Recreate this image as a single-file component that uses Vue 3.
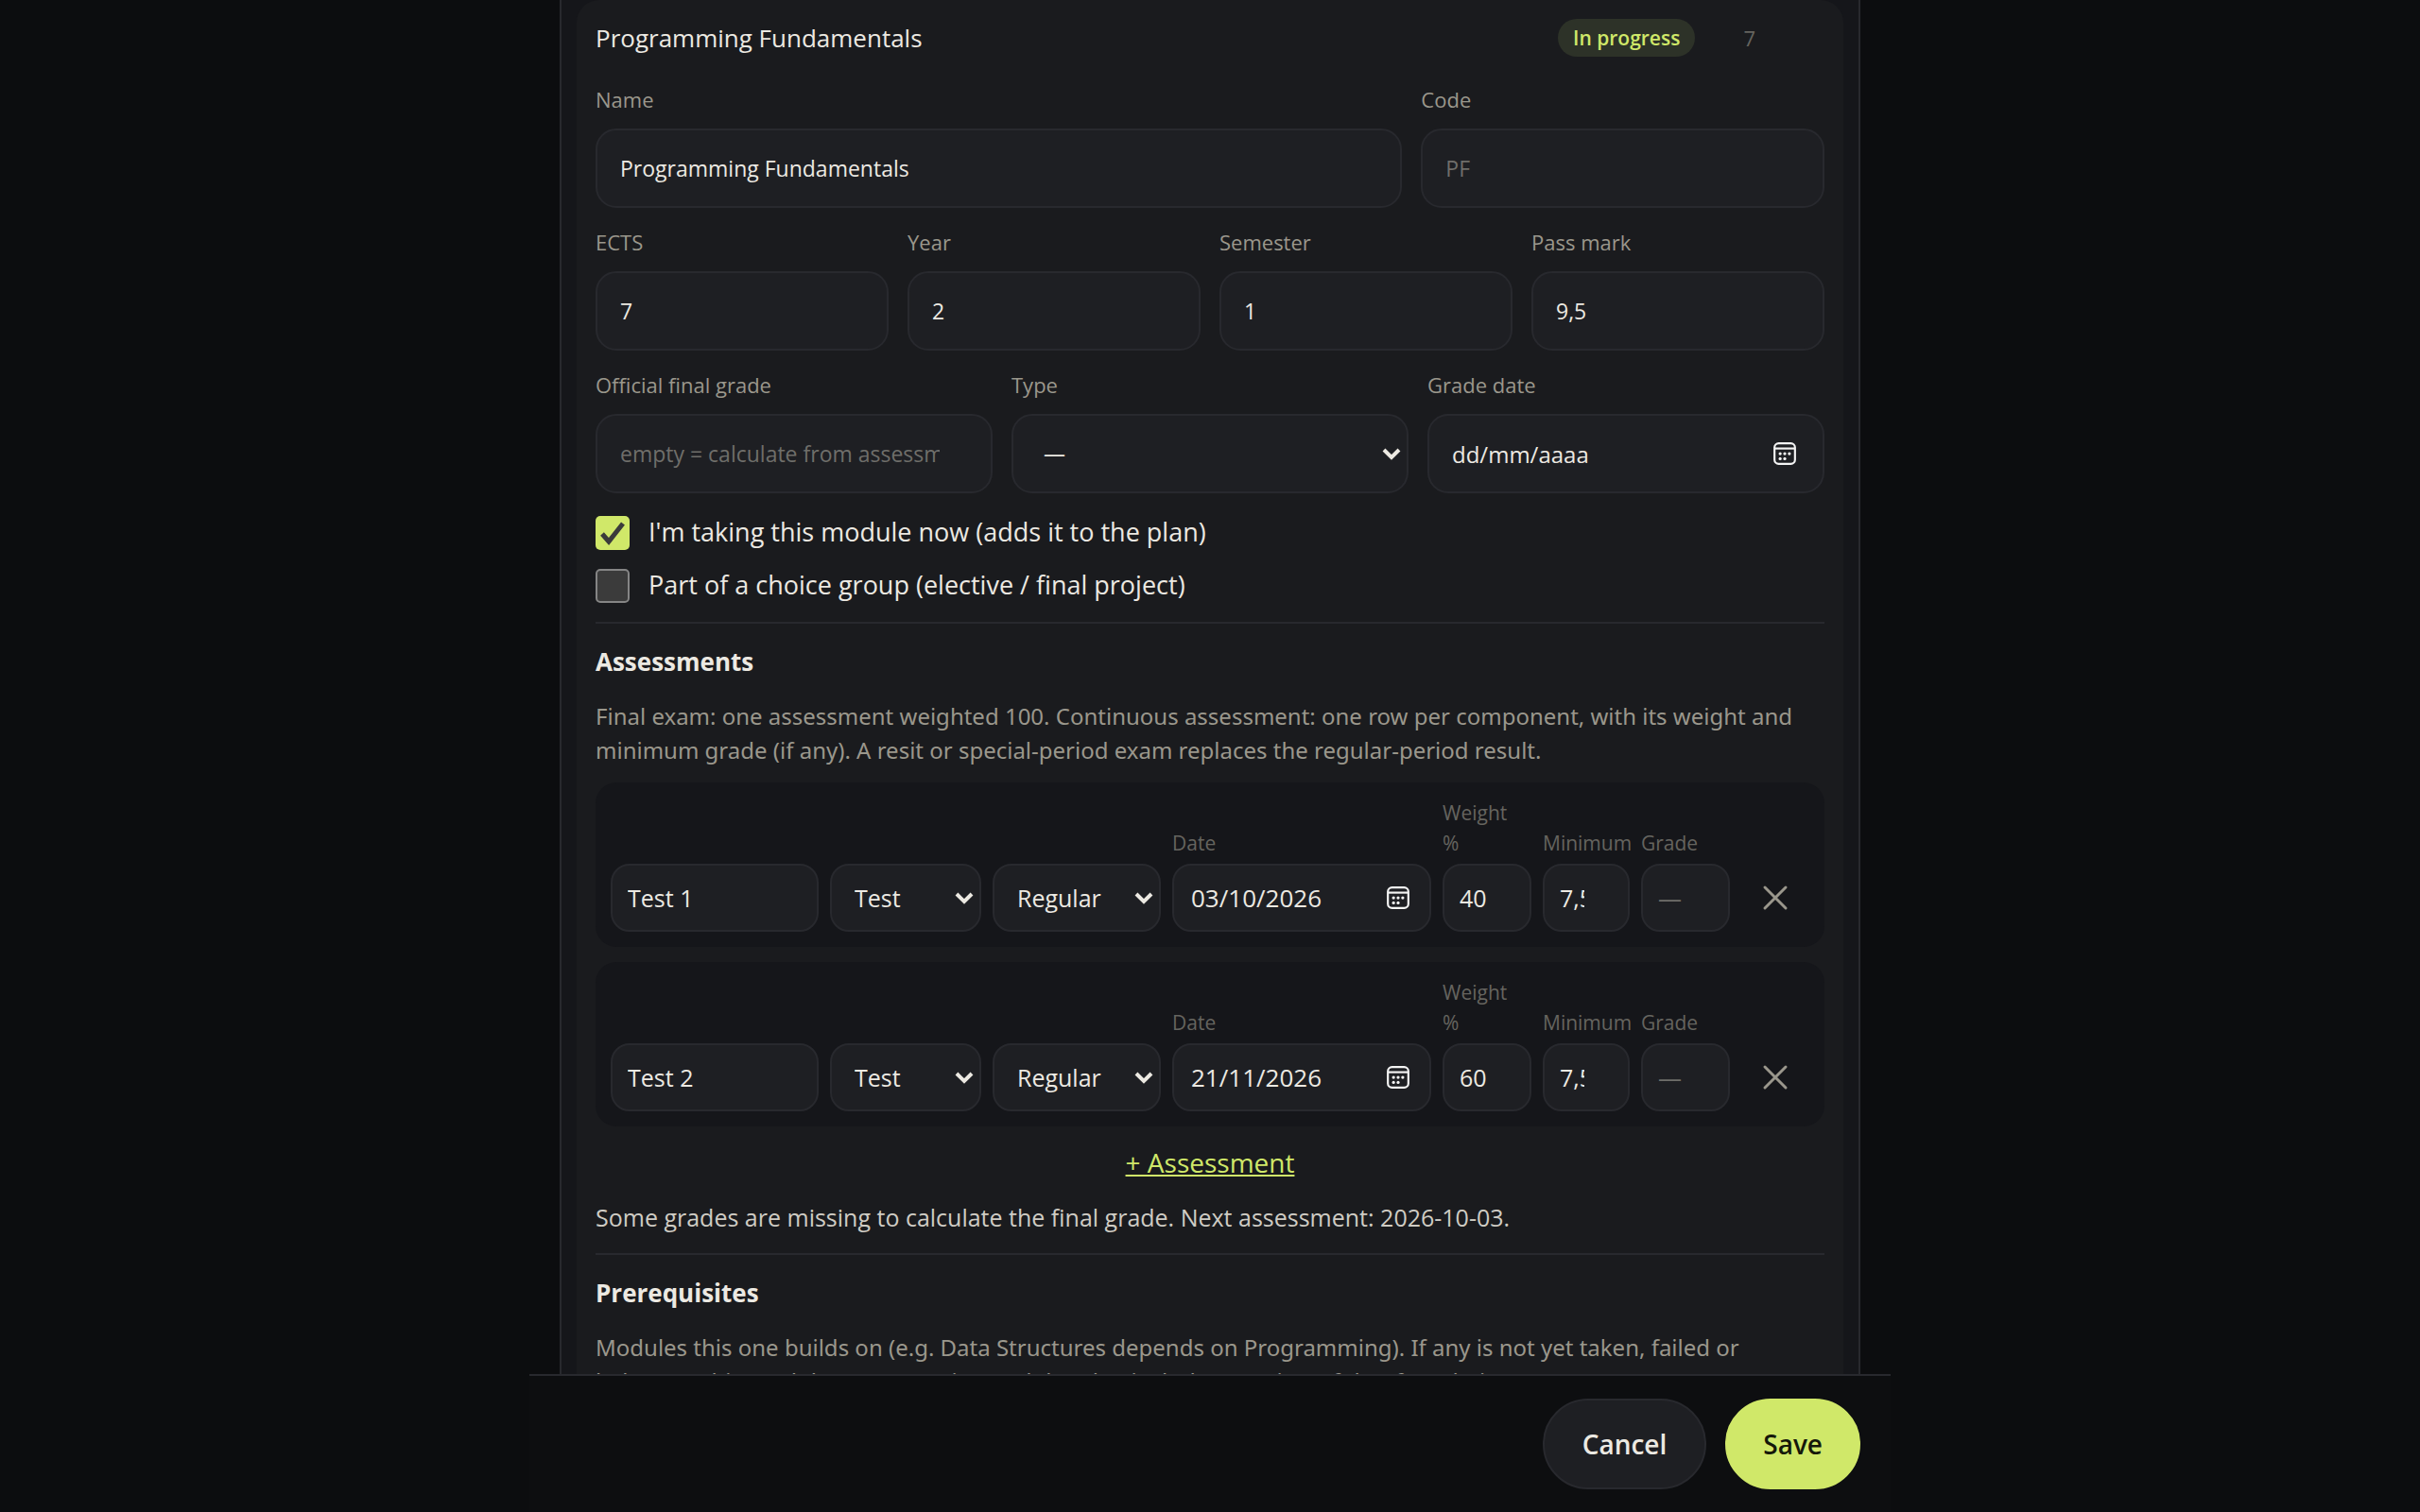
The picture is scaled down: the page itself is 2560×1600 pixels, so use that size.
<script setup>
import { ref } from 'vue'

const moduleForm = ref({
  name: 'Programming Fundamentals',
  code: '',
  ects: '7',
  year: '2',
  semester: '1',
  passMark: '9,5',
  finalGrade: '',
  type: '—',
  gradeDate: 'dd/mm/aaaa',
  taking: true,
  choiceGroup: false,
})

const assessments = ref([
  { id: 1, name: 'Test 1', kind: 'Test', period: 'Regular', date: '03/10/2026', weight: '40', minimum: '7,5', grade: '' },
  { id: 2, name: 'Test 2', kind: 'Test', period: 'Regular', date: '21/11/2026', weight: '60', minimum: '7,5', grade: '' },
])

const numbers = [
  { key: 'ects', label: 'ECTS' },
  { key: 'year', label: 'Year' },
  { key: 'semester', label: 'Semester' },
  { key: 'passMark', label: 'Pass mark' },
]

function removeRow(id) {
  assessments.value = assessments.value.filter((a) => a.id !== id)
}
</script>

<template>
  <div class="page">
    <main class="scroller">
      <div class="panel">
        <section class="card">
          <header class="card-head">
            <h2 class="title">Programming Fundamentals</h2>
            <span class="badge">In progress</span>
            <span class="credits">7</span>
          </header>

          <div class="row cols-name">
            <div class="field">
              <label for="name">Name</label>
              <input id="name" v-model="moduleForm.name" class="control" type="text" />
            </div>
            <div class="field">
              <label for="code">Code</label>
              <input id="code" v-model="moduleForm.code" class="control" type="text" placeholder="PF" />
            </div>
          </div>

          <div class="row cols-4">
            <div v-for="n in numbers" :key="n.key" class="field">
              <label :for="n.key">{{ n.label }}</label>
              <input :id="n.key" v-model="moduleForm[n.key]" class="control" type="text" inputmode="decimal" />
            </div>
          </div>

          <div class="row cols-3">
            <div class="field">
              <label for="final">Official final grade</label>
              <input id="final" v-model="moduleForm.finalGrade" class="control number" type="text" inputmode="decimal" placeholder="empty = calculate from assessments" />
            </div>
            <div class="field">
              <label for="type">Type</label>
              <div class="wrap">
                <select id="type" v-model="moduleForm.type" class="control"><option>—</option></select>
                <svg class="chevron" viewBox="0 0 20 14" aria-hidden="true"><path d="M2 3l8 8 8-8" /></svg>
              </div>
            </div>
            <div class="field">
              <label for="gradeDate">Grade date</label>
              <div class="wrap">
                <input id="gradeDate" v-model="moduleForm.gradeDate" class="control date" type="text" />
                <svg class="calendar" viewBox="0 0 24 24" aria-hidden="true">
                  <rect x="2" y="2" width="20" height="20" rx="4" /><path d="M2 7h20" />
                  <g class="dots"><circle cx="7.500" cy="12" r="1.500" /><circle cx="12" cy="12" r="1.500" /><circle cx="16.500" cy="12" r="1.500" /><circle cx="7.500" cy="17" r="1.500" /><circle cx="12" cy="17" r="1.500" /></g>
                </svg>
              </div>
            </div>
          </div>

          <div class="checks">
            <label class="check"><input v-model="moduleForm.taking" type="checkbox" />I'm taking this module now (adds it to the plan)</label>
            <label class="check"><input v-model="moduleForm.choiceGroup" type="checkbox" />Part of a choice group (elective / final project)</label>
          </div>

          <section class="block">
            <h3>Assessments</h3>
            <p class="help">Final exam: one assessment weighted 100. Continuous assessment: one row per component, with its weight and minimum grade (if any). A resit or special-period exam replaces the regular-period result.</p>

            <div class="list">
              <div v-for="a in assessments" :key="a.id" class="assessment">
                <input v-model="a.name" class="control small" type="text" aria-label="Assessment name" />
                <div class="wrap">
                  <select v-model="a.kind" class="control small" aria-label="Kind"><option>Test</option></select>
                  <svg class="chevron" viewBox="0 0 20 14" aria-hidden="true"><path d="M2 3l8 8 8-8" /></svg>
                </div>
                <div class="wrap">
                  <select v-model="a.period" class="control small" aria-label="Period"><option>Regular</option></select>
                  <svg class="chevron" viewBox="0 0 20 14" aria-hidden="true"><path d="M2 3l8 8 8-8" /></svg>
                </div>
                <div class="mini">
                  <label :for="'date' + a.id">Date</label>
                  <div class="wrap">
                    <input :id="'date' + a.id" v-model="a.date" class="control small date" type="text" />
                    <svg class="calendar" viewBox="0 0 24 24" aria-hidden="true">
                      <rect x="2" y="2" width="20" height="20" rx="4" /><path d="M2 7h20" />
                      <g class="dots"><circle cx="7.500" cy="12" r="1.500" /><circle cx="12" cy="12" r="1.500" /><circle cx="16.500" cy="12" r="1.500" /><circle cx="7.500" cy="17" r="1.500" /><circle cx="12" cy="17" r="1.500" /></g>
                    </svg>
                  </div>
                </div>
                <div class="mini">
                  <label :for="'weight' + a.id">Weight<br />%</label>
                  <input :id="'weight' + a.id" v-model="a.weight" class="control small number" type="text" inputmode="decimal" />
                </div>
                <div class="mini">
                  <label :for="'min' + a.id">Minimum</label>
                  <input :id="'min' + a.id" v-model="a.minimum" class="control small number" type="text" inputmode="decimal" />
                </div>
                <div class="mini">
                  <label :for="'grade' + a.id">Grade</label>
                  <input :id="'grade' + a.id" v-model="a.grade" class="control small number" type="text" inputmode="decimal" placeholder="—" />
                </div>
                <button class="remove" type="button" aria-label="Remove assessment" @click="removeRow(a.id)">
                  <svg viewBox="0 0 28 28" aria-hidden="true"><path d="M3 3l22 22M25 3L3 25" /></svg>
                </button>
              </div>
            </div>

            <button class="add" type="button">+ Assessment</button>
            <p class="status">Some grades are missing to calculate the final grade. Next assessment: 2026-10-03.</p>
          </section>

          <section class="block">
            <h3>Prerequisites</h3>
            <p class="help">Modules this one builds on (e.g. Data Structures depends on Programming). If any is not yet taken, failed or<br />below 10, this module gets a caution and the plan includes a review of that foundation.</p>
          </section>
        </section>
      </div>
    </main>

    <footer class="actions">
      <button class="btn" type="button">Cancel</button>
      <button class="btn primary" type="button">Save</button>
    </footer>
  </div>
</template>

<style>
body {
  background: #0c0d0f;
}
</style>

<style scoped>
.page {
  display: flex;
  flex-direction: column;
  height: 100vh;
  color: #ece9e2;
  font-family: "Segoe UI", "Open Sans", "Noto Sans", sans-serif;
  font-size: 25px;
}

.page *,
.page {
  box-sizing: border-box;
}

button,
input,
select {
  margin: 0;
  color: inherit;
  font: inherit;
}

.scroller {
  flex: 1;
  min-height: 0;
  overflow: hidden;
}

.panel {
  max-width: 1376px;
  min-height: 100%;
  margin: 0 auto;
  padding: 0 16px;
  border: solid #28292e;
  border-width: 0 2px;
  background: #15161a;
}

.card {
  padding: 16px 20px 40px;
  border-radius: 24px;
  background: #1a1b1e;
}

.card-head {
  display: flex;
  align-items: center;
  height: 48px;
  padding-right: 73px;
}

.title {
  flex: 1;
  margin: 0;
  font-size: 26px;
  font-weight: 400;
}

.badge {
  padding: 0 16px;
  border-radius: 20px;
  background: #2d3228;
  color: #d0e869;
  font-size: 21px;
  font-weight: 600;
  line-height: 40px;
}

.credits {
  margin-left: 51px;
  color: #65645f;
  font-size: 22px;
}

.row {
  display: grid;
  gap: 20px;
  margin-top: 19px;
}

.cols-name {
  grid-template-columns: 2fr 1fr;
  margin-top: 24px;
}

.cols-4 {
  grid-template-columns: repeat(4, 1fr);
}

.cols-3 {
  grid-template-columns: repeat(3, 1fr);
}

.field {
  display: flex;
  flex-direction: column;
  gap: 14px;
  min-width: 0;
}

.field label {
  color: #9a978c;
  font-size: 22px;
  line-height: 34px;
}

.control {
  display: block;
  width: 100%;
  min-width: 0;
  height: 84px;
  padding: 0 24px;
  border: 2px solid #28292e;
  border-radius: 22px;
  outline: none;
  background: #1e1f23;
  font-size: 23px;
  appearance: none;
}

.control::placeholder {
  color: #6f6e6a;
  opacity: 1;
}

.control.number {
  padding-right: 54px;
}

.control.date {
  font-size: 24px;
}

select.control {
  padding-left: 32px;
}

.control.small {
  height: 72px;
  padding: 0 16px;
  border-radius: 20px;
  font-size: 25px;
}

.control.small.date {
  padding-left: 18px;
  font-size: 26px;
}

select.control.small {
  padding-left: 24px;
}

.control.small.number {
  padding-right: 46px;
}

.wrap {
  position: relative;
}

.chevron {
  position: absolute;
  top: 50%;
  right: 8px;
  width: 20px;
  height: 14px;
  margin-top: -7px;
  fill: none;
  stroke: #ece9e2;
  stroke-width: 4;
  pointer-events: none;
}

.calendar {
  position: absolute;
  top: 50%;
  right: 29px;
  width: 26px;
  height: 26px;
  margin-top: -13px;
  fill: none;
  stroke: #f4f4f4;
  stroke-width: 2;
  pointer-events: none;
}

.small + .calendar {
  right: 22px;
}

.dots {
  fill: #f4f4f4;
  stroke: none;
}

.checks {
  display: flex;
  flex-direction: column;
  gap: 20px;
  margin-top: 24px;
}

.check {
  display: flex;
  align-items: flex-start;
  gap: 20px;
  height: 36px;
  font-size: 27px;
  line-height: 34px;
}

.check input {
  width: 36px;
  height: 36px;
  border: 2px solid #858585;
  border-radius: 5px;
  background: #3b3b3b;
  appearance: none;
}

.check input:checked {
  border: 0;
  background: #d0e869 url("data:image/svg+xml,%3Csvg xmlns='http://www.w3.org/2000/svg' viewBox='0 0 36 36'%3E%3Cpath d='M7 19l7 8L29 8' fill='none' stroke='%233b3b3b' stroke-width='5'/%3E%3C/svg%3E");
}

.block {
  margin-top: 20px;
  padding-top: 20px;
  border-top: 2px solid #28292e;
}

h3 {
  margin: 0;
  font-size: 26px;
  font-weight: 700;
  line-height: 40px;
}

.help {
  margin: 20px 0 0;
  color: #9a978c;
  font-family: "Segoe UI", "Noto Sans", "Open Sans", sans-serif;
  font-size: 24px;
  line-height: 36px;
}

.list {
  display: flex;
  flex-direction: column;
  gap: 16px;
  margin-top: 16px;
}

.assessment {
  display: grid;
  grid-template-columns: 220fr 160fr 178fr 274fr 94fr 92fr 94fr 72px;
  gap: 12px;
  align-items: end;
  padding: 16px;
  border-radius: 22px;
  background: #15161a;
}

.mini {
  display: flex;
  flex-direction: column;
  gap: 6px;
  min-width: 0;
}

.mini label {
  color: #65645f;
  font-size: 21px;
  line-height: 32px;
}

.remove {
  display: grid;
  place-items: center;
  height: 72px;
  padding: 0;
  border: 0;
  background: none;
}

.remove svg {
  width: 28px;
  height: 28px;
  fill: none;
  stroke: #9a978c;
  stroke-width: 3;
  stroke-linecap: round;
}

.add {
  display: block;
  margin: 18px auto 0;
  padding: 0;
  border: 0;
  background: none;
  color: #d0e869;
  font-size: 28px;
  line-height: 40px;
  text-decoration: underline;
}

.status {
  margin: 20px 0 0;
  color: #cfccc4;
  line-height: 36px;
}

.actions {
  display: flex;
  justify-content: flex-end;
  gap: 20px;
  width: 100%;
  max-width: 1440px;
  margin: 0 auto;
  padding: 24px 32px;
  border-top: 2px solid #28292e;
  background: #0d0e10;
}

.btn {
  height: 96px;
  padding: 0 40px;
  border: 2px solid #28292e;
  border-radius: 48px;
  background: #1e1f23;
  font-size: 28px;
  font-weight: 600;
}

.btn.primary {
  padding: 0 38px;
  border-color: #d0e869;
  background: #d0e869;
  color: #15180a;
}
</style>
